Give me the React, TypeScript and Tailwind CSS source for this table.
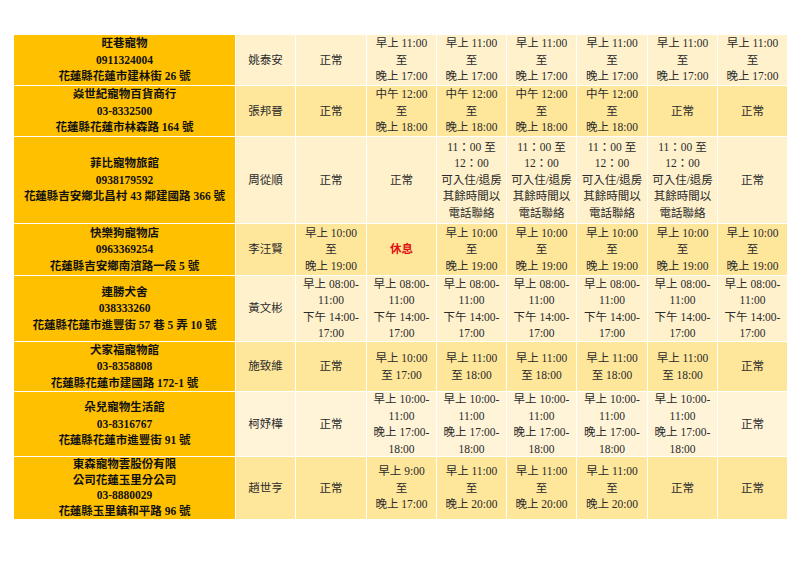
import React from 'react';

type Row = {
  store: string[];
  owner: string;
  days: string[];
  bg: string;
  storeLeading?: string;
};

const open11to17 = '早上 11:00\n至\n晚上 17:00';
const noon12to18 = '中午 12:00\n至\n晚上 18:00';
const hotel = '11：00 至\n12：00\n可入住/退房\n其餘時間以\n電話聯絡';
const open10to19 = '早上 10:00\n至\n晚上 19:00';
const split8 = '早上 08:00-\n11:00\n下午 14:00-\n17:00';
const split10 = '早上 10:00-\n11:00\n晚上 17:00-\n18:00';
const open11to20 = '早上 11:00\n至\n晚上 20:00';

const rows: Row[] = [
  {
    store: ['旺巷寵物', '0911324004', '花蓮縣花蓮市建林街 26 號'],
    owner: '姚泰安',
    days: ['正常', open11to17, open11to17, open11to17, open11to17, open11to17, open11to17],
    bg: 'bg-[#fff1cc]',
  },
  {
    store: ['焱世紀寵物百貨商行', '03-8332500', '花蓮縣花蓮市林森路 164 號'],
    owner: '張邦晉',
    days: ['正常', noon12to18, noon12to18, noon12to18, noon12to18, '正常', '正常'],
    bg: 'bg-[#fee69b]',
  },
  {
    store: ['菲比寵物旅館', '0938179592', '花蓮縣吉安鄉北昌村 43 鄰建國路 366 號'],
    owner: '周從順',
    days: ['正常', '正常', hotel, hotel, hotel, hotel, '正常'],
    bg: 'bg-[#fff1cc]',
  },
  {
    store: ['快樂狗寵物店', '0963369254', '花蓮縣吉安鄉南濱路一段 5 號'],
    owner: '李汪賢',
    days: [open10to19, '休息', open10to19, open10to19, open10to19, open10to19, open10to19],
    bg: 'bg-[#fee69b]',
  },
  {
    store: ['連勝犬舍', '038333260', '花蓮縣花蓮市進豐街 57 巷 5 弄 10 號'],
    owner: '黃文彬',
    days: [split8, split8, split8, split8, split8, split8, split8],
    bg: 'bg-[#fff1cc]',
  },
  {
    store: ['犬家福寵物館', '03-8358808', '花蓮縣花蓮市建國路 172-1 號'],
    owner: '施致維',
    days: ['正常', '早上 10:00\n至 17:00', '早上 11:00\n至 18:00', '早上 11:00\n至 18:00', '早上 11:00\n至 18:00', '早上 11:00\n至 18:00', '正常'],
    bg: 'bg-[#fee69b]',
  },
  {
    store: ['朵兒寵物生活館', '03-8316767', '花蓮縣花蓮市進豐街 91 號'],
    owner: '柯妤樺',
    days: ['正常', split10, split10, split10, split10, split10, '正常'],
    bg: 'bg-[#fff4d8]',
  },
  {
    store: ['東森寵物雲股份有限', '公司花蓮玉里分公司', '03-8880029', '花蓮縣玉里鎮和平路 96 號'],
    owner: '趙世亨',
    days: ['正常', '早上 9:00\n至\n晚上 17:00', open11to20, open11to20, open11to20, '正常', '正常'],
    bg: 'bg-[#fee69b]',
    storeLeading: 'leading-[15.5px]',
  },
];

const font = { fontFamily: '"Liberation Serif", "Noto Sans CJK TC", serif' };

export default function App() {
  return (
    <div className="w-[800px] h-[566px] bg-white pt-[35px] pl-[14px]" style={font}>
      <div className="grid w-[773px] gap-px bg-white grid-cols-[221px_59px_70px_69px_69px_69px_70px_69px_69px] grid-rows-[50px_50px_86px_51px_65px_49px_64px_62px] text-[11.5px] leading-[16.5px] text-[#2a2a2a]">
        {rows.map((row, i) => (
          <React.Fragment key={i}>
            <div
              className={`bg-[#ffc000] flex flex-col items-center justify-center font-bold text-[#111] ${row.storeLeading ?? ''}`}
            >
              {row.store.map((line) => (
                <div key={line}>{line}</div>
              ))}
            </div>
            <div className={`${row.bg} flex items-center justify-center`}>{row.owner}</div>
            {row.days.map((d, j) => (
              <div
                key={j}
                className={`${row.bg} flex items-center justify-center text-center whitespace-pre-line ${
                  d === '休息' ? 'text-[#e01010] font-bold' : ''
                }`}
              >
                {d}
              </div>
            ))}
          </React.Fragment>
        ))}
      </div>
    </div>
  );
}
